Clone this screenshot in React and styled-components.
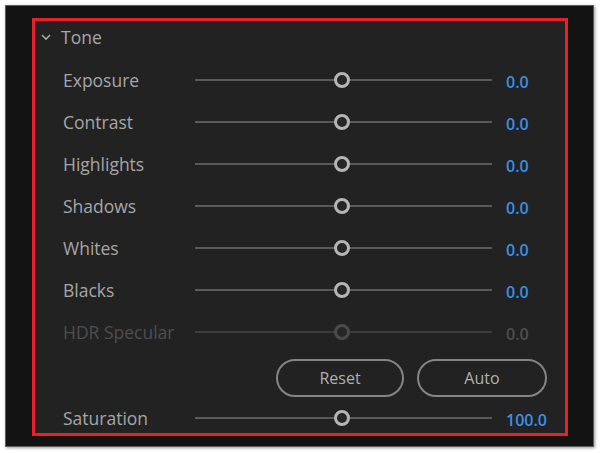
import React from 'react';
import styled, { createGlobalStyle } from 'styled-components';

const GlobalStyle = createGlobalStyle`
    body {
        margin: 0;
        background: #ffffff;
        font-family: "Open Sans", "Noto Sans", sans-serif;
    }
`;

const Page = styled.div`
    width: 600px;
    height: 453px;
    padding: 5px 6px 6px 5px;
    box-sizing: border-box;
`;

const Window = styled.div`
    width: 589px;
    height: 442px;
    box-sizing: border-box;
    background: #131313;
    border: 1px solid #5e5e5e;
    padding: 12px 25px 10px 26px;
    box-shadow: 1px 1px 3px rgba(0, 0, 0, 0.4);
`;

const Panel = styled.section`
    width: 536px;
    height: 418px;
    box-sizing: border-box;
    border: 3px solid #e8202a;
    background: #222222;
    overflow: hidden;
    display: flex;
    flex-direction: column;
`;

const Header = styled.div`
    height: 32px;
    margin-bottom: 6px;
    flex-shrink: 0;
    display: flex;
    align-items: center;
    padding-left: 6px;
    gap: 10px;
    color: #a8a8a8;
    font-size: 17.5px;
`;

const Row = styled.div`
    height: 42px;
    flex-shrink: 0;
    display: grid;
    grid-template-columns: 132px 297px 1fr;
    align-items: center;
    padding-left: 28px;
`;

const Label = styled.span`
    font-size: 17.5px;
    color: ${p => (p.$disabled ? '#4e4e4e' : '#a6a6a6')};
    white-space: nowrap;
`;

const Track = styled.div`
    position: relative;
    height: 2px;
    background: ${p => (p.$disabled ? '#3c3c3c' : '#5a5a5a')};
`;

const Thumb = styled.div`
    position: absolute;
    top: 50%;
    width: 16px;
    height: 16px;
    box-sizing: border-box;
    border-radius: 50%;
    border: 3px solid ${p => (p.$disabled ? '#4a4a4a' : '#b5b5b5')};
    background: #262626;
    transform: translate(-50%, -50%);
`;

const Value = styled.span`
    padding-left: 14px;
    padding-top: 3px;
    font-size: 16px;
    font-weight: 600;
    color: ${p => (p.$disabled ? '#4e4e4e' : '#3b8fe6')};
`;

const ButtonRow = styled.div`
    height: 38px;
    flex-shrink: 0;
    display: flex;
    justify-content: flex-end;
    gap: 13px;
    padding-right: 18px;
    margin-top: 6px;
`;

const PillButton = styled.button`
    width: ${p => p.$w}px;
    height: 38px;
    border-radius: 19px;
    border: 2px solid #858585;
    background: transparent;
    color: #b0b0b0;
    font-family: inherit;
    font-size: 16px;
`;

const Chevron = () => (
    <svg width="10" height="8" viewBox="0 0 10 8">
        <path d="M1 2 L5 6 L9 2" fill="none" stroke="#a8a8a8" strokeWidth="1.6" />
    </svg>
);

const Slider = ({ label, value, pos = 49.5, disabled }) => (
    <Row>
        <Label $disabled={disabled}>{label}</Label>
        <Track $disabled={disabled}>
            <Thumb $disabled={disabled} style={{ left: `${pos}%` }} />
        </Track>
        <Value $disabled={disabled}>{value}</Value>
    </Row>
);

const tone = ['Exposure', 'Contrast', 'Highlights', 'Shadows', 'Whites', 'Blacks'];

const App = () => {
    return (
        <Page>
            <GlobalStyle />
            <Window>
                <Panel>
                    <Header>
                        <Chevron />
                        <span>Tone</span>
                    </Header>
                    {tone.map(name => (
                        <Slider key={name} label={name} value="0.0" />
                    ))}
                    <Slider label="HDR Specular" value="0.0" disabled />
                    <ButtonRow>
                        <PillButton $w={128}>Reset</PillButton>
                        <PillButton $w={130}>Auto</PillButton>
                    </ButtonRow>
                    <Slider label="Saturation" value="100.0" />
                </Panel>
            </Window>
        </Page>
    );
};

export default App;
